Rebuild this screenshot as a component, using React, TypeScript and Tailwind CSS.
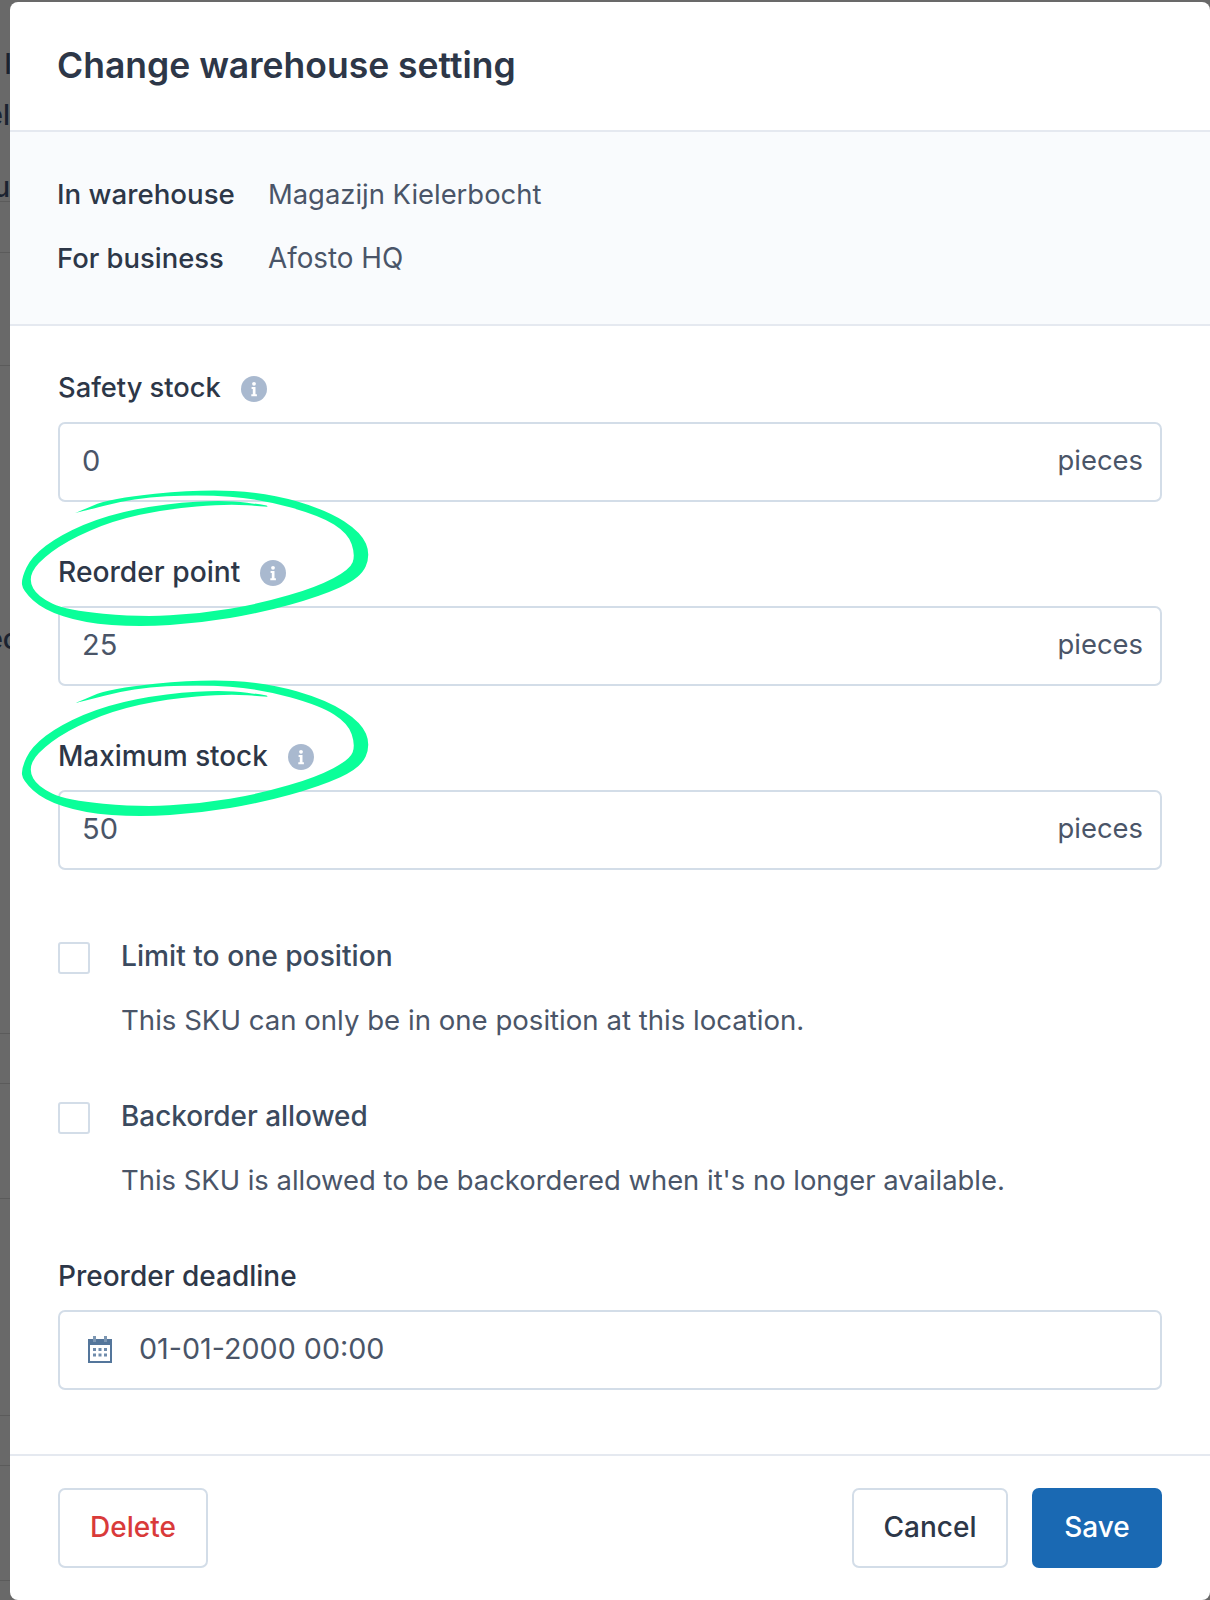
import React from 'react';

const FONT = "font-['Inter','Liberation_Sans',sans-serif]";

// backdrop rows visible left of the modal: [height, divider line, ghost text, nudge]
const backdrop: [number, boolean, string, string][] = [
  [44, false, '', ''],
  [40, false, 'I', 'translate-x-[2px]'],
  [14, false, '', ''],
  [34, false, 'el', ''],
  [40, false, '', ''],
  [30, true, 'u', ''],
  [51, true, '', ''],
  [113, true, '', ''],
  [253, false, '', ''],
  [40, false, 'ec', 'translate-x-[9px]'],
  [375, true, '', ''],
  [50, true, '', ''],
  [115, true, '', ''],
  [217, true, '', ''],
  [50, true, '', ''],
  [115, true, '', ''],
];

// outline of the hand drawn marker loop, in 3x coordinates
const loop: [number, number][] = [
  [226, 99], [226, 99], [330, 55], [600, 28], [800, 38], [980, 90], [1084, 158], [1112, 225], [1082, 294], [960, 349],
  [780, 399], [600, 429], [420, 441], [250, 429], [130, 389], [68, 332], [64, 295], [95, 230], [180, 165],
  [320, 105], [500, 70], [680, 60], [802, 76], [802, 80], [802, 80], [680, 72], [500, 87], [340, 122], [200, 182], [110, 250],
  [86, 300], [113, 350], [200, 391], [420, 411], [600, 401], [780, 371], [950, 321], [1050, 268], [1066, 225],
  [1044, 160], [960, 107], [780, 57], [600, 43], [400, 55],
];

function loopPath() {
  const mid = (a: [number, number], b: [number, number]) => `${(a[0] + b[0]) / 2} ${(a[1] + b[1]) / 2}`;
  let d = `M${mid(loop[loop.length - 1], loop[0])}`;
  loop.forEach((p, i) => {
    d += ` Q${p[0]} ${p[1]} ${mid(p, loop[(i + 1) % loop.length])}`;
  });
  return d + 'Z';
}

function Marker({ className }: { className: string }) {
  return (
    <svg className={`absolute left-[-10px] w-[420px] h-[160px] pointer-events-none ${className}`} viewBox="0 0 1260 480">
      <path d={loopPath()} fill="#0aff99" />
    </svg>
  );
}

function InfoIcon() {
  return (
    <svg className="w-[26px] h-[26px] ml-[20px] mt-[2px] shrink-0" viewBox="0 0 26 26">
      <circle cx="13" cy="13" r="13" fill="#a9b9cf" />
      <circle cx="13" cy="7.8" r="1.9" fill="#fff" />
      <path d="M10.6 11h3.9v7.2h1.4v2h-5.6v-2h1.5v-5.2h-1.2z" fill="#fff" />
    </svg>
  );
}

function CalendarIcon() {
  return (
    <svg className="w-[24px] h-[27px] shrink-0" viewBox="0 0 24 27">
      <rect x="1" y="4" width="22" height="22" fill="none" stroke="#54769b" strokeWidth="2" />
      <rect x="1" y="4" width="22" height="5" fill="#54769b" />
      <rect x="5" y="0" width="3" height="6" fill="#7d97b3" />
      <rect x="16" y="0" width="3" height="6" fill="#7d97b3" />
      <path d="M5 12h3v3H5zM10.500 12h3v3h-3zM16 12h3v3h-3zM5 17.500h3v3H5zM10.500 17.500h3v3h-3zM16 17.500h3v3h-3z" fill="#6f8bab" />
    </svg>
  );
}

function StockField({ label, value, size }: { label: string; value: string; size: string }) {
  return (
    <div className="mt-[53px] first:mt-0">
      <div className="flex items-center mb-[17px]">
        <label className={`${size} leading-[34px] font-medium text-[#2d3748]`}>{label}</label>
        <InfoIcon />
      </div>
      <div className="flex items-center h-[80px] border-2 border-[#d3dde8] rounded-[7px] pl-[22px] pr-[17px] pb-[3px]">
        <span className="flex-1 text-[29px] text-[#4a5568]">{value}</span>
        <span className="text-[27.4px] text-[#4a5568]">pieces</span>
      </div>
    </div>
  );
}

function CheckRow({ label, text, size, textSize }: { label: string; text: string; size: string; textSize: string }) {
  return (
    <div className="flex gap-[31px] mt-[62px] first:mt-0">
      <div className="w-[32px] h-[32px] mt-[3px] border-2 border-[#d3dde8] rounded-[3px] shrink-0" />
      <div>
        <div className={`${size} leading-[34px] font-medium text-[#3b4a5e]`}>{label}</div>
        <div className={`${textSize} leading-[34px] mt-[30px] text-[#4a5568]`}>{text}</div>
      </div>
    </div>
  );
}

export default function App() {
  return (
    <div className={`flex w-[1210px] h-[1600px] overflow-hidden bg-[#696969] ${FONT}`}>
      <div className="w-[10px] shrink-0 flex flex-col">
        {backdrop.map(([h, line, text, nudge], i) => (
          <div
            key={i}
            style={{ height: h }}
            className={`flex justify-end items-center overflow-hidden whitespace-nowrap text-[28px] font-medium text-[#1b2330] ${line ? 'border-b border-[#5b5b5b]' : ''}`}
          >
            <span className={nudge}>{text}</span>
          </div>
        ))}
      </div>

      <div className="relative flex-1 mt-[2px] h-[1598px] bg-white rounded-[8px] overflow-hidden">
        <div className="h-[130px] pl-[47px] pt-[47px] border-b-2 border-[#e5e9f0]">
          <h1 className="text-[35.5px] leading-[34px] font-semibold text-[#2d3748]">Change warehouse setting</h1>
        </div>

        <div className="bg-[#f9fbfd] border-b-2 border-[#e5e9f0] pl-[47px] pt-[45px] pb-[49px] text-[27.4px] leading-[34px]">
          <div className="flex">
            <span className="w-[211px] text-[27.7px] font-medium text-[#2d3748]">In warehouse</span>
            <span className="text-[#4a5568]">Magazijn Kielerbocht</span>
          </div>
          <div className="flex mt-[30px]">
            <span className="w-[211px] font-medium text-[#2d3748]">For business</span>
            <span className="text-[27.8px] text-[#4a5568]">Afosto HQ</span>
          </div>
        </div>

        <div className="pl-[48px] pr-[48px] pt-[45px]">
          <div>
            <StockField label="Safety stock" value="0" size="text-[27.3px]" />
            <StockField label="Reorder point" value="25" size="text-[28.2px]" />
            <StockField label="Maximum stock" value="50" size="text-[27.8px]" />
          </div>

          <div className="mt-[69px]">
            <CheckRow
              label="Limit to one position"
              text="This SKU can only be in one position at this location."
              size="text-[28.2px]"
              textSize="text-[27.6px]"
            />
            <CheckRow
              label="Backorder allowed"
              text="This SKU is allowed to be backordered when it's no longer available."
              size="text-[27.9px]"
              textSize="text-[27.4px]"
            />
          </div>

          <div className="mt-[62px]">
            <label className="block text-[28px] leading-[34px] font-medium text-[#2d3748] mb-[17px]">Preorder deadline</label>
            <div className="flex items-center gap-[27px] h-[80px] border-2 border-[#d3dde8] rounded-[7px] pl-[28px] pb-[2px]">
              <CalendarIcon />
              <span className="text-[28.7px] text-[#4a5568]">01-01-2000 00:00</span>
            </div>
          </div>
        </div>

        <div className="flex justify-between mt-[64px] border-t-2 border-[#e5e9f0] pl-[48px] pr-[48px] pt-[32px]">
          <button className="w-[150px] h-[80px] pb-[2px] border-2 border-[#d3dde8] rounded-[7px] text-[28px] font-medium text-[#d93a3a] bg-white">Delete</button>
          <div className="flex gap-[24px]">
            <button className="w-[156px] h-[80px] pb-[2px] border-2 border-[#d3dde8] rounded-[7px] text-[28px] font-medium text-[#2d3748] bg-white">Cancel</button>
            <button className="w-[130px] h-[80px] pb-[2px] rounded-[7px] text-[28px] font-medium text-white bg-[#1a69b3]">Save</button>
          </div>
        </div>

        <Marker className="top-[478px]" />
        <Marker className="top-[668px]" />
      </div>
    </div>
  );
}
